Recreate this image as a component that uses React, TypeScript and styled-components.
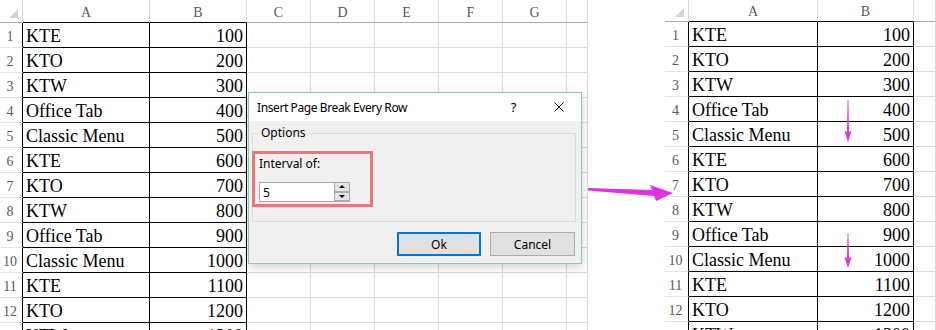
import styled, { createGlobalStyle } from "styled-components";

const data: [string, string][] = [
  ["KTE", "100"],
  ["KTO", "200"],
  ["KTW", "300"],
  ["Office Tab", "400"],
  ["Classic Menu", "500"],
  ["KTE", "600"],
  ["KTO", "700"],
  ["KTW", "800"],
  ["Office Tab", "900"],
  ["Classic Menu", "1000"],
  ["KTE", "1100"],
  ["KTO", "1200"],
  ["KTW", "1300"],
];

type Layout = {
  rowHeader: number;
  colA: number;
  colB: number;
  headerHeight: number;
  extra: { label: string; width: number }[];
};

const leftLayout: Layout = {
  rowHeader: 23,
  colA: 127,
  colB: 97,
  headerHeight: 23,
  extra: [
    { label: "C", width: 64 },
    { label: "D", width: 64 },
    { label: "E", width: 64 },
    { label: "F", width: 64 },
    { label: "G", width: 64 },
    { label: "", width: 21 },
  ],
};

const rightLayout: Layout = {
  rowHeader: 24,
  colA: 129,
  colB: 96,
  headerHeight: 22,
  extra: [{ label: "", width: 22 }],
};

function Sheet({ layout, children }: { layout: Layout; children?: React.ReactNode }) {
  return (
    <SheetBox>
      <Row>
        <Corner $w={layout.rowHeader} $h={layout.headerHeight} />
        <ColHeader $w={layout.colA} $h={layout.headerHeight} $boxed>
          A
        </ColHeader>
        <ColHeader $w={layout.colB} $h={layout.headerHeight} $boxed>
          B
        </ColHeader>
        {layout.extra.map((col, i) => (
          <ColHeader key={i} $w={col.width} $h={layout.headerHeight}>
            {col.label}
          </ColHeader>
        ))}
      </Row>
      {data.map(([name, value], r) => (
        <Row key={r}>
          <RowNumber $w={layout.rowHeader}>{r + 1}</RowNumber>
          <Cell $w={layout.colA} $boxed>
            {name}
          </Cell>
          <Cell $w={layout.colB} $boxed $right>
            {value}
          </Cell>
          {layout.extra.map((col, i) => (
            <Cell key={i} $w={col.width} />
          ))}
        </Row>
      ))}
      {children}
    </SheetBox>
  );
}

function SmallArrow({ top, length }: { top: number; length: number }) {
  const L = length;
  return (
    <DownArrow $top={top} width="8" height={L} viewBox={`0 0 8 ${L}`}>
      <polygon
        points={`3.6,0 4.4,0 5,${L - 10} 7.5,${L - 11} 4,${L} 0.5,${L - 11} 3,${L - 10}`}
        fill="#e032e0"
      />
    </DownArrow>
  );
}

export default function App() {
  return (
    <>
      <GlobalStyle />
      <Page>
        <Sheet layout={leftLayout} />
        <Spacer />
        <Sheet layout={rightLayout}>
          <SmallArrow top={100} length={42} />
          <SmallArrow top={233} length={35} />
        </Sheet>

        <Dialog>
          <TitleBar>
            <Title>Insert Page Break Every Row</Title>
            <TitleButton>?</TitleButton>
            <TitleButton>
              <svg width="10" height="10" viewBox="0 0 10 10">
                <path d="M0.5 0.5 L9.5 9.5 M9.5 0.5 L0.5 9.5" stroke="#111" strokeWidth="1" />
              </svg>
            </TitleButton>
          </TitleBar>
          <Options>
            <Legend>Options</Legend>
            <Highlight>
              <FieldLabel>Interval of:</FieldLabel>
              <SpinBox>
                <SpinInput value="5" readOnly />
                <Spinner>
                  <SpinButton $up />
                  <SpinButton />
                </Spinner>
              </SpinBox>
            </Highlight>
          </Options>
          <Footer>
            <DialogButton $primary>Ok</DialogButton>
            <DialogButton>Cancel</DialogButton>
          </Footer>
        </Dialog>

        <BigArrow width="90" height="24" viewBox="0 0 90 24">
          <polygon points="2,6 66,8 64,3 87,11 70,19 68,14 2,8.5" fill="#e032e0" />
        </BigArrow>
      </Page>
    </>
  );
}

const GlobalStyle = createGlobalStyle`
  body {
    margin: 0;
    background: #fff;
  }
`;

const Page = styled("div")`
  position: relative;
  display: flex;
  align-items: flex-start;
  width: 936px;
  height: 330px;
  overflow: hidden;
  background: #fff;
`;

const Spacer = styled("div")`
  flex: none;
  width: 77px;
`;

const SheetBox = styled("div")`
  position: relative;
  flex: none;
  display: flex;
  flex-direction: column;
`;

const Row = styled("div")`
  display: flex;
`;

type SizeProps = { $w: number; $h?: number; $boxed?: boolean; $right?: boolean };

const Corner = styled("div")<SizeProps>`
  flex: none;
  box-sizing: border-box;
  width: ${({ $w }) => $w}px;
  height: ${({ $h }) => $h}px;
  border-right: 1px solid #d9d9d9;
  border-bottom: 1px solid #ababab;
  display: flex;
  align-items: flex-end;
  justify-content: flex-end;
  padding: 0 4px 4px 0;

  &::after {
    content: "";
    width: 0;
    height: 0;
    border-left: 9px solid transparent;
    border-bottom: 9px solid #d4d4d4;
  }
`;

const ColHeader = styled("div")<SizeProps>`
  flex: none;
  box-sizing: border-box;
  width: ${({ $w }) => $w}px;
  height: ${({ $h }) => $h}px;
  padding-top: 2px;
  border-right: 1px solid #dadada;
  border-bottom: 1px solid ${({ $boxed }) => ($boxed ? "#000" : "#ababab")};
  font: 14px/${({ $h }) => ($h ?? 23) - 2}px "Liberation Serif", "Times New Roman", serif;
  color: #5a5a5a;
  text-align: center;
`;

const RowNumber = styled("div")<SizeProps>`
  flex: none;
  box-sizing: border-box;
  width: ${({ $w }) => $w}px;
  height: 25px;
  padding: 3px 2px 0 0;
  border-right: 1px solid #000;
  border-bottom: 1px solid #e4e4e4;
  font: 14px/22px "Liberation Serif", "Times New Roman", serif;
  color: #5a5a5a;
  text-align: center;
`;

const Cell = styled("div")<SizeProps>`
  flex: none;
  box-sizing: border-box;
  width: ${({ $w }) => $w}px;
  height: 25px;
  padding: 1px 3px 0 3px;
  border-right: 1px solid ${({ $boxed }) => ($boxed ? "#000" : "#dadada")};
  border-bottom: 1px solid ${({ $boxed }) => ($boxed ? "#000" : "#dadada")};
  font: 18px/25px "Liberation Serif", "Times New Roman", serif;
  color: #000;
  text-align: ${({ $right }) => ($right ? "right" : "left")};
  white-space: nowrap;
`;

const DownArrow = styled("svg")<{ $top: number }>`
  position: absolute;
  left: 179px;
  top: ${({ $top }) => $top}px;
`;

const BigArrow = styled("svg")`
  position: absolute;
  left: 586px;
  top: 182px;
`;

const Dialog = styled("div")`
  position: absolute;
  left: 248px;
  top: 92px;
  box-sizing: border-box;
  width: 334px;
  height: 172px;
  display: flex;
  flex-direction: column;
  background: #f0f0f0;
  border: 1px solid #86cca4;
  box-shadow: 0 3px 10px rgba(0, 0, 0, 0.18);
  font-family: "Noto Sans", "Open Sans", sans-serif;
  font-size: 12px;
  color: #000;
`;

const TitleBar = styled("div")`
  display: flex;
  align-items: center;
  height: 28px;
  padding-left: 8px;
  background: #fff;
`;

const Title = styled("div")`
  flex: 1;
  white-space: nowrap;
  letter-spacing: -0.4px;
`;

const TitleButton = styled("div")`
  width: 45px;
  height: 28px;
  display: flex;
  align-items: center;
  justify-content: center;
  font-size: 13px;
`;

const Options = styled("fieldset")`
  box-sizing: border-box;
  height: 97px;
  min-width: 0;
  margin: 4px 5px 0 3px;
  padding: 0 0 0 6px;
  border: 1px solid #dcdcdc;
`;

const Legend = styled("legend")`
  padding: 0 2px;
  line-height: 16px;
`;

const Highlight = styled("div")`
  box-sizing: border-box;
  width: 121px;
  height: 56px;
  margin: 10px 0 0 -7px;
  padding: 1px 0 0 4px;
  border: 3px solid #e47b7b;
`;

const FieldLabel = styled("div")`
  line-height: 17px;
`;

const SpinBox = styled("div")`
  box-sizing: border-box;
  display: flex;
  width: 91px;
  height: 20px;
  margin-top: 10px;
  border: 1px solid #a9a9a9;
  background: #fff;
`;

const SpinInput = styled("input")`
  flex: 1;
  min-width: 0;
  border: none;
  outline: none;
  padding: 0 0 0 3px;
  background: transparent;
  font: inherit;
  color: #000;
`;

const Spinner = styled("div")`
  display: flex;
  flex-direction: column;
  width: 15px;
`;

const SpinButton = styled("div")<{ $up?: boolean }>`
  flex: 1;
  box-sizing: border-box;
  display: flex;
  align-items: center;
  justify-content: center;
  border: 1px solid #adadad;
  border-top-width: ${({ $up }) => ($up ? 0 : 1)}px;
  border-right-width: 0;
  background: #e5e5e5;

  &::after {
    content: "";
    width: 0;
    height: 0;
    border-left: 3px solid transparent;
    border-right: 3px solid transparent;
    ${({ $up }) => ($up ? "border-bottom: 3px solid #000;" : "border-top: 3px solid #000;")}
  }
`;

const Footer = styled("div")`
  display: flex;
  justify-content: flex-end;
  gap: 9px;
  margin-top: 10px;
  padding-right: 6px;
`;

const DialogButton = styled("div")<{ $primary?: boolean }>`
  box-sizing: border-box;
  width: ${({ $primary }) => ($primary ? 84 : 85)}px;
  height: 24px;
  display: flex;
  align-items: center;
  justify-content: center;
  background: #e1e1e1;
  border: ${({ $primary }) => ($primary ? "2px solid #0078d7" : "1px solid #adadad")};
`;
